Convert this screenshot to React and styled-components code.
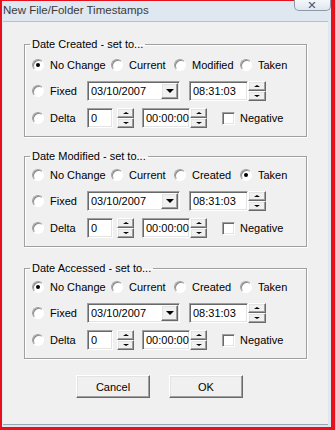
import React from 'react'
import styled, { createGlobalStyle, css } from 'styled-components'

const GlobalStyle = createGlobalStyle`
  html, body {
    margin: 0;
    padding: 0;
    background: #ffffff;
  }
  * {
    box-sizing: border-box;
  }
`

const sunken = css`
  border: 1px solid;
  border-color: #a0a0a0 #ffffff #ffffff #a0a0a0;
  box-shadow: inset 1px 1px 0 #696969, inset -1px -1px 0 #e3e3e3;
`

const raised = css`
  border: 1px solid;
  border-color: #ffffff #696969 #696969 #ffffff;
  box-shadow: inset -1px -1px 0 #a0a0a0, inset 1px 1px 0 #e3e3e3;
`

const Frame = styled.div`
  width: 335px;
  height: 430px;
  border-style: solid;
  border-color: #e8101a;
  border-width: 1px 4px 3px 2px;
  background: #dfe7f0;
  display: flex;
  flex-direction: column;
  font-family: 'Liberation Sans', Arial, sans-serif;
  font-size: 11px;
  color: #000;
`

const TitleBar = styled.div`
  height: 20px;
  display: flex;
  justify-content: space-between;
  align-items: flex-start;
  padding-left: 1px;
`

const Title = styled.div`
  font-size: 11.5px;
  color: #3a3a3a;
  line-height: 20px;
  margin-top: -1px;
`

const CloseButton = styled.div`
  width: 37px;
  height: 11px;
  margin-top: -1px;
  border: 1px solid #8d99a8;
  border-top: none;
  border-radius: 0 0 5px 5px;
  background: linear-gradient(#f4f7fa, #dfe6ee);
  display: flex;
  justify-content: center;
  align-items: flex-end;
  padding-bottom: 2px;
`

const Client = styled.div`
  flex: 1;
  margin: 0 3px 2px 1px;
  background: #f0f0f0;
  border-top: 1px solid #b7c1cd;
  border-bottom: 1px solid #9aa4b0;
  padding: 16px 21px 0 21px;
  display: flex;
  flex-direction: column;
`

const Group = styled.fieldset`
  margin: 0 0 ${p => p.$after}px 0;
  padding: ${p => p.$top}px 6px 8px 7px;
  border: 1px solid #a0a0a0;
  box-shadow: 1px 1px 0 #ffffff, inset 1px 1px 0 #ffffff;
  width: 283px;
  display: flex;
  flex-direction: column;
  gap: 6px;
`

const Legend = styled.legend`
  padding: 0 2px;
  margin-left: -2px;
  line-height: 13px;
  font-size: 11px;
`

const Row = styled.div`
  height: 20px;
  display: flex;
  align-items: center;
  margin-top: ${p => (p.$extra ? 1 : 0)}px;
`

const OptionLabel = styled.label`
  display: flex;
  align-items: center;
  gap: 6px;
  width: ${p => (p.$width ? `${p.$width}px` : 'auto')};
  flex-shrink: 0;
  white-space: nowrap;
`

const RadioCircle = styled.span`
  width: 12px;
  height: 12px;
  border-radius: 50%;
  border: 1px solid;
  border-color: #a0a0a0 #ffffff #ffffff #a0a0a0;
  box-shadow: inset 1px 1px 0 #8a8a8a;
  background: #ffffff;
  display: flex;
  align-items: center;
  justify-content: center;
  flex-shrink: 0;
  &::after {
    content: '';
    width: 4px;
    height: 4px;
    border-radius: 50%;
    background: ${p => (p.$checked ? '#000' : 'transparent')};
  }
`

const Field = styled.div`
  ${sunken};
  background: #ffffff;
  height: 20px;
  width: ${p => p.$width}px;
  margin-left: ${p => p.$gap || 0}px;
  display: flex;
  align-items: center;
  padding-left: 3px;
  flex-shrink: 0;
`

const FieldText = styled.span`
  flex: 1;
  white-space: nowrap;
  overflow: hidden;
`

const DropButton = styled.span`
  ${raised};
  width: 17px;
  height: 16px;
  margin-right: 1px;
  background: #f0f0f0;
  display: flex;
  align-items: center;
  justify-content: center;
  &::after {
    content: '';
    border-left: 4px solid transparent;
    border-right: 4px solid transparent;
    border-top: 4px solid #000;
  }
`

const Spin = styled.div`
  width: ${p => p.$width || 17}px;
  height: 20px;
  margin-left: ${p => p.$gap || 0}px;
  display: flex;
  flex-direction: column;
  flex-shrink: 0;
`

const SpinHalf = styled.span`
  ${raised};
  flex: 1;
  background: #f0f0f0;
  display: flex;
  align-items: center;
  justify-content: center;
  &::after {
    content: '';
    border-left: 3px solid transparent;
    border-right: 3px solid transparent;
    ${p =>
      p.$up
        ? 'border-bottom: 2px solid #000;'
        : 'border-top: 2px solid #000;'}
  }
`

const CheckBox = styled.span`
  ${sunken};
  width: 13px;
  height: 13px;
  background: #ffffff;
  flex-shrink: 0;
`

const CheckLabel = styled.label`
  display: flex;
  align-items: center;
  gap: 5px;
  margin-left: ${p => p.$gap}px;
`

const ButtonRow = styled.div`
  display: flex;
  gap: 19px;
  padding-left: 52px;
  margin-top: 3px;
`

const Button = styled.button`
  ${raised};
  width: 74px;
  height: 23px;
  background: #f0f0f0;
  font-family: 'Liberation Sans', Arial, sans-serif;
  font-size: 11px;
  color: #000;
  padding: 0;
`

const groups = [
  {
    title: 'Date Created - set to...',
    options: ['No Change', 'Current', 'Modified', 'Taken'],
    selected: 0,
    top: 4,
    after: 13
  },
  {
    title: 'Date Modified - set to...',
    options: ['No Change', 'Current', 'Created', 'Taken'],
    selected: 3,
    top: 2,
    after: 15
  },
  {
    title: 'Date Accessed - set to...',
    options: ['No Change', 'Current', 'Created', 'Taken'],
    selected: 0,
    top: 2,
    after: 13
  }
]

const optionWidths = [79, 63, 66, null]

function Radio({ label, checked, width }) {
  return (
    <OptionLabel $width={width}>
      <RadioCircle $checked={checked} />
      {label}
    </OptionLabel>
  )
}

function SpinButtons({ width, gap }) {
  return (
    <Spin $width={width} $gap={gap}>
      <SpinHalf $up />
      <SpinHalf />
    </Spin>
  )
}

function TimestampGroup({ title, options, selected, top, after }) {
  return (
    <Group $top={top} $after={after}>
      <Legend>{title}</Legend>
      <Row>
        {options.map((o, i) => (
          <Radio
            key={o}
            label={o}
            checked={i === selected}
            width={optionWidths[i]}
          />
        ))}
      </Row>
      <Row>
        <Radio label="Fixed" width={55} />
        <Field $width={93}>
          <FieldText>03/10/2007</FieldText>
          <DropButton />
        </Field>
        <Field $width={59} $gap={9}>
          <FieldText>08:31:03</FieldText>
        </Field>
        <SpinButtons width={18} />
      </Row>
      <Row $extra>
        <Radio label="Delta" width={55} />
        <Field $width={26}>
          <FieldText>0</FieldText>
        </Field>
        <SpinButtons gap={4} />
        <Field $width={48} $gap={8}>
          <FieldText>00:00:00</FieldText>
        </Field>
        <SpinButtons />
        <CheckLabel $gap={15}>
          <CheckBox />
          Negative
        </CheckLabel>
      </Row>
    </Group>
  )
}

export default function App() {
  return (
    <>
      <GlobalStyle />
      <Frame>
        <TitleBar>
          <Title>New File/Folder Timestamps</Title>
          <CloseButton>
            <svg width="9" height="6" viewBox="0 0 9 6">
              <path d="M1 0 L7 6 M7 0 L1 6" stroke="#5a6474" strokeWidth="1.3" fill="none" />
            </svg>
          </CloseButton>
        </TitleBar>
        <Client>
          {groups.map(g => (
            <TimestampGroup key={g.title} {...g} />
          ))}
          <ButtonRow>
            <Button>Cancel</Button>
            <Button>OK</Button>
          </ButtonRow>
        </Client>
      </Frame>
    </>
  )
}
